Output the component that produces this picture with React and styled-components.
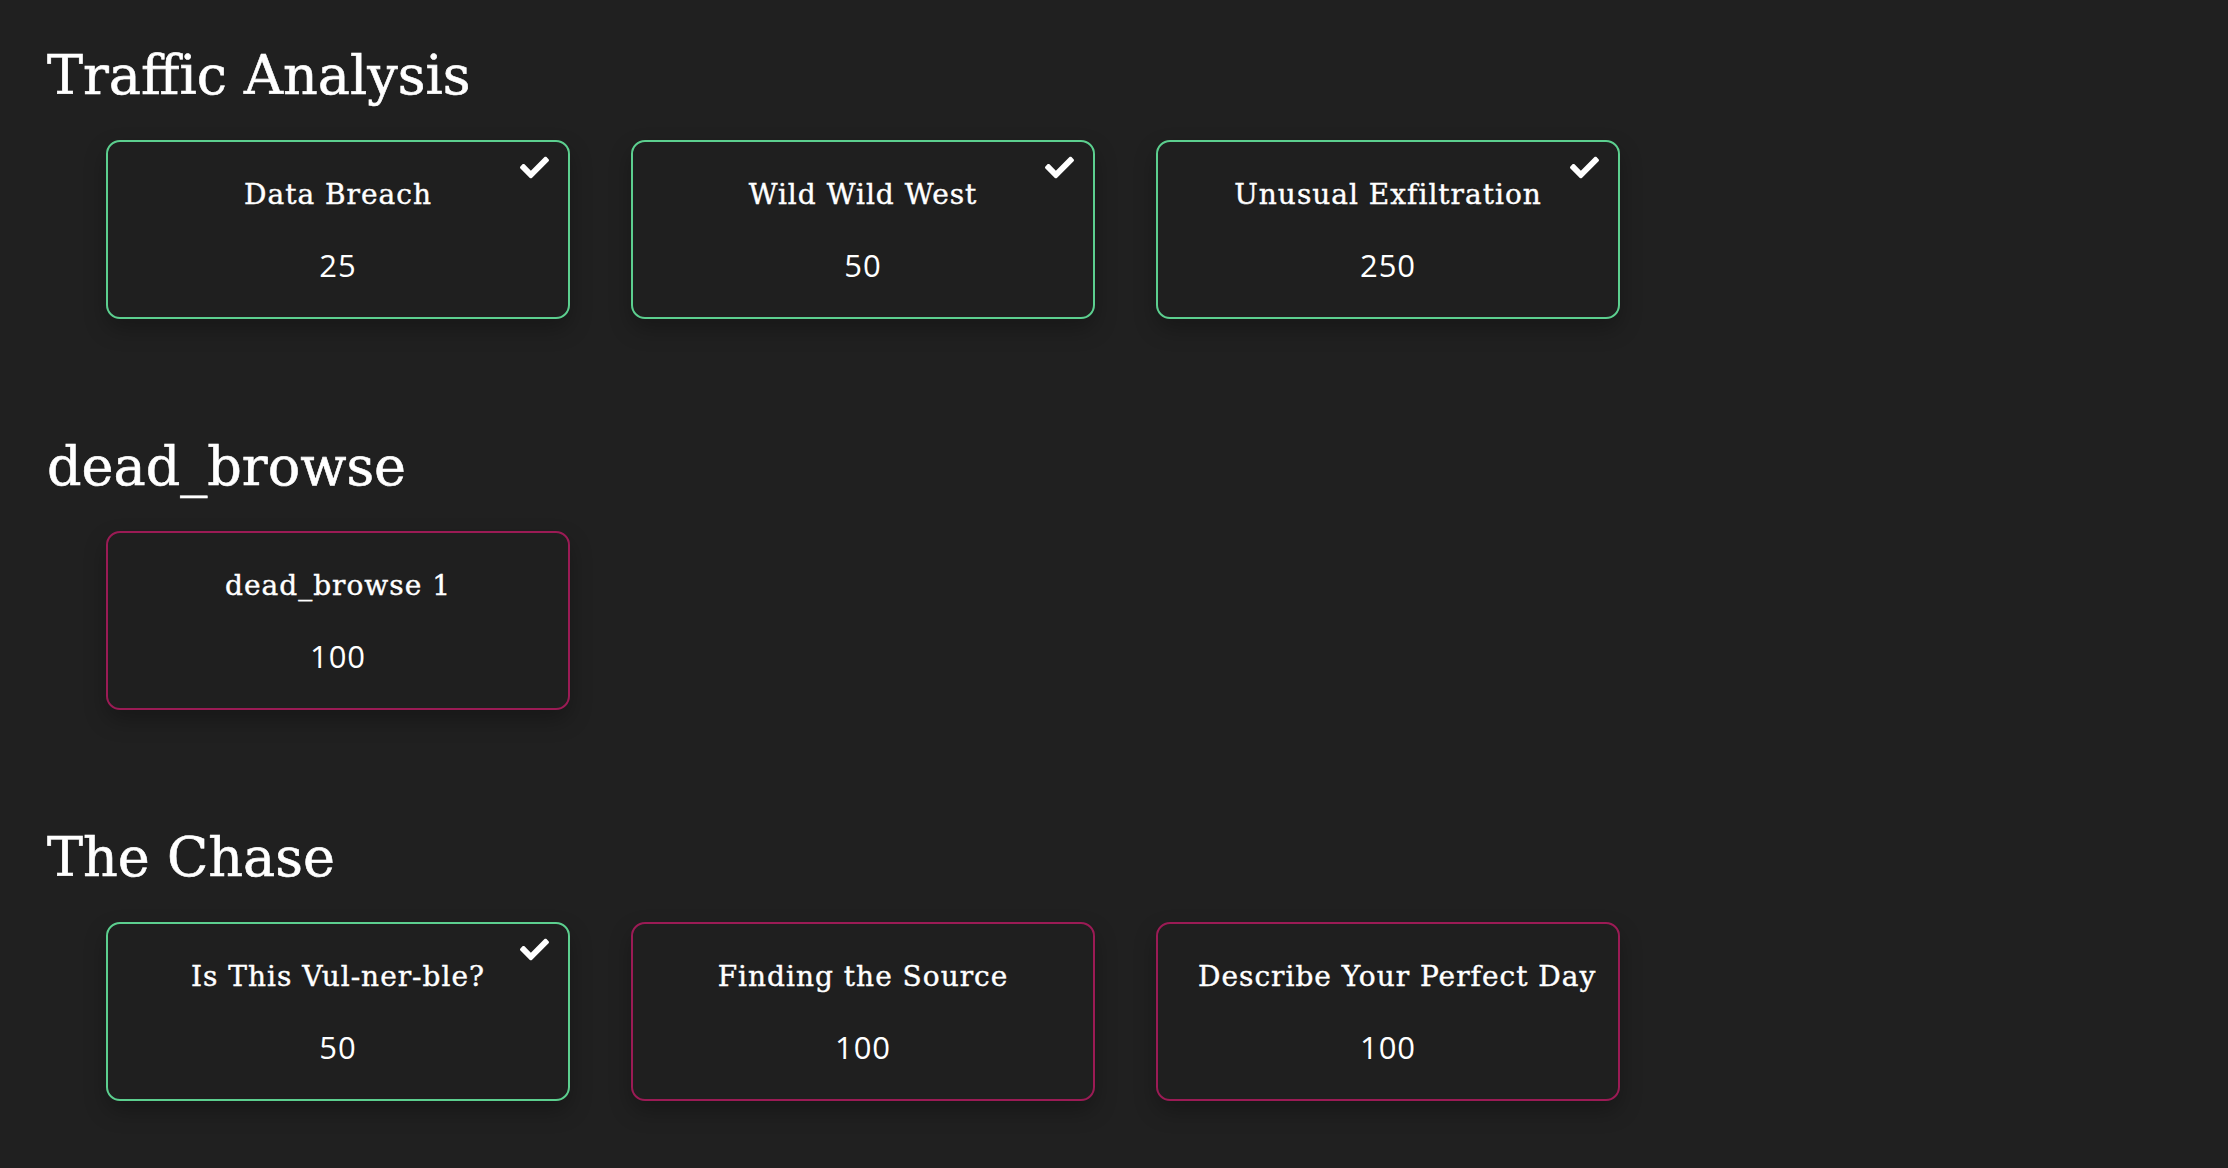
import React from "react";
import styled, { createGlobalStyle } from "styled-components";
import { FaCheck } from "react-icons/fa";

const GlobalStyle = createGlobalStyle`
  html, body {
    margin: 0;
    padding: 0;
    background: #202020;
    color: #ffffff;
  }
  * { box-sizing: border-box; }
`;

const Page = styled.main`
  min-height: 100vh;
  background: #202020;
  padding: 44px 0 40px 47px;
  display: flex;
  flex-direction: column;
  gap: 116px;
`;

const Section = styled.section`
  display: flex;
  flex-direction: column;
  gap: 32px;
`;

const Heading = styled.h2`
  margin: 0;
  font-family: "DejaVu Serif", "Liberation Serif", serif;
  font-weight: 400;
  font-size: 54px;
  line-height: 64px;
  color: #ffffff;
  -webkit-text-stroke: 0.6px #ffffff;
`;

const CardRow = styled.div`
  display: flex;
  gap: 61px;
  padding-left: 59px;
`;

const Card = styled.div`
  position: relative;
  width: 464px;
  height: 179px;
  padding: 37px 40px 0;
  border: 2px solid ${(p) => (p.$solved ? "#5ccf8f" : "#9b1b55")};
  border-radius: 14px;
  background: #1f1f1f;
  box-shadow: 0 10px 22px rgba(0, 0, 0, 0.28);
  display: flex;
  flex-direction: column;
  gap: 34px;
  text-align: center;
  cursor: pointer;
`;

const Title = styled.div`
  font-family: "DejaVu Serif", "Liberation Serif", serif;
  font-size: 28px;
  line-height: 32px;
  letter-spacing: 1px;
  white-space: nowrap;
  color: #ffffff;
  -webkit-text-stroke: 0.4px #ffffff;
`;

const Points = styled.div`
  font-family: "Open Sans", "Noto Sans", sans-serif;
  font-weight: 500;
  font-size: 31px;
  line-height: 40px;
  letter-spacing: 1px;
  color: #ffffff;
`;

const Check = styled(FaCheck)`
  position: absolute;
  top: 11px;
  right: 19px;
  width: 29px;
  height: 29px;
  color: #ffffff;
`;

const data = [
  {
    name: "Traffic Analysis",
    challenges: [
      { title: "Data Breach", points: 25, solved: true },
      { title: "Wild Wild West", points: 50, solved: true },
      { title: "Unusual Exfiltration", points: 250, solved: true },
    ],
  },
  {
    name: "dead_browse",
    challenges: [{ title: "dead_browse 1", points: 100, solved: false }],
  },
  {
    name: "The Chase",
    challenges: [
      { title: "Is This Vul-ner-ble?", points: 50, solved: true },
      { title: "Finding the Source", points: 100, solved: false },
      { title: "Describe Your Perfect Day", points: 100, solved: false },
    ],
  },
];

export default function App() {
  return (
    <>
      <GlobalStyle />
      <Page>
        {data.map((cat) => (
          <Section key={cat.name}>
            <Heading>{cat.name}</Heading>
            <CardRow>
              {cat.challenges.map((c) => (
                <Card key={c.title} $solved={c.solved}>
                  {c.solved && <Check />}
                  <Title>{c.title}</Title>
                  <Points>{c.points}</Points>
                </Card>
              ))}
            </CardRow>
          </Section>
        ))}
      </Page>
    </>
  );
}
